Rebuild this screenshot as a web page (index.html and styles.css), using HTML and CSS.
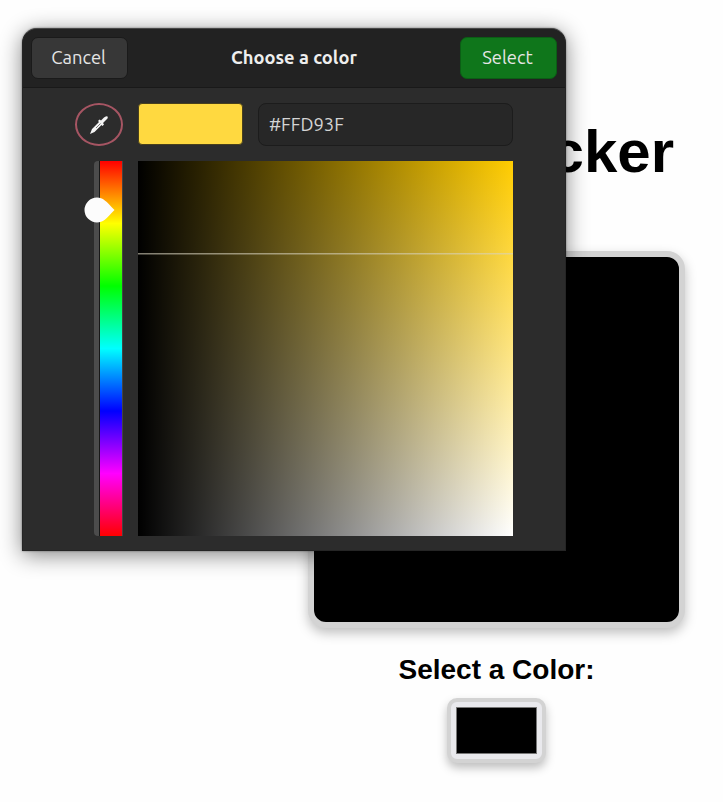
FILE: index.html
```html
<!DOCTYPE html>
<html lang="en">
<head>
<meta charset="utf-8">
<title>Color Picker</title>
<link rel="stylesheet" href="styles.css">
</head>
<body>
<main class="page">
  <h1 class="title">Picker</h1>
  <div class="preview"></div>
  <label class="label" for="color">Select a Color:</label>
  <button class="swatch-input" id="color" aria-label="Color"><span class="swatch-value"></span></button>
</main>
<section class="dialog">
  <header class="header">
    <button class="btn">Cancel</button>
    <h2 class="dialog-title">Choose a color</h2>
    <button class="btn btn-select">Select</button>
  </header>
  <div class="editor">
    <button class="dropper" aria-label="Pick a color">
      <svg width="20" height="20" viewBox="0 0 20 20">
        <path d="M1 19L3 14L10 7L9 6L10.500 4.500L12 5.500L15 2.500Q18 .500 18.500 1.500Q19.500 3 17 5L14 8L15 9.500L13.500 11L12.500 10L5.500 17Z" fill="#f4f4f4"/>
        <path d="M7 13L11.500 8.500" stroke="#777" stroke-width="1"/>
      </svg>
    </button>
    <div class="fields">
      <div class="current"></div>
      <div class="hex">#FFD93F</div>
    </div>
    <div class="hue">
      <svg class="thumb" width="32" height="26" viewBox="0 0 32 26"><path d="M13 .500A12.500 12.500 0 1 0 13 25.500C19 25.500 22 22 30.500 13C22 4 19 .500 13 .500Z" fill="#fcfcfc"/></svg>
    </div>
    <div class="plane"><div class="crosshair"></div></div>
  </div>
</section>
</body>
</html>
```
FILE: styles.css
```css
* { box-sizing: border-box; }
body {
  position: relative;
  margin: 0;
  width: 723px;
  height: 802px;
  overflow: hidden;
  background: #fefefe;
  color: #000;
  font-family: "Liberation Sans", Arial, sans-serif;
}
button { font: inherit; margin: 0; }
.page {
  width: 377px;
  margin-left: 308px;
  padding-top: 117px;
  display: flex;
  flex-direction: column;
  align-items: center;
}
.title {
  align-self: flex-end;
  margin: 0 11px 0 0;
  font-size: 60px;
  line-height: 70px;
  white-space: nowrap;
}
.preview {
  width: 377px;
  height: 377px;
  margin-top: 64px;
  border: 6px solid #d3d3d3;
  border-radius: 18px;
  background: #000;
  box-shadow: 0 5px 12px rgba(0, 0, 0, .25);
}
.label { margin-top: 26px; font-size: 28px; font-weight: bold; line-height: 32px; }
.swatch-input {
  width: 99px;
  height: 65px;
  margin: 12px 1px 0 0;
  padding: 5px;
  border: 4px solid #d3d3d3;
  border-radius: 10px;
  background: #e9e9ed;
  box-shadow: 0 5px 10px rgba(0, 0, 0, .25);
}
.swatch-value { display: block; height: 100%; border: 1px solid #777; background: #000; }

.dialog {
  position: absolute;
  left: 22px;
  top: 28px;
  width: 544px;
  height: 523px;
  border: 1px solid #252525;
  border-top-color: #484848;
  border-radius: 15px 15px 0 0;
  background: #2c2c2c;
  box-shadow: 0 0 2px rgba(0, 0, 0, .5), 0 4px 22px rgba(0, 0, 0, .48);
  color: #eee;
  font-family: Ubuntu, "Noto Sans", sans-serif;
  font-size: 18.400px;
}
.header {
  height: 59px;
  padding: 0 8px;
  display: flex;
  align-items: center;
  justify-content: space-between;
  border-bottom: 1px solid #191919;
  border-radius: 14px 14px 0 0;
  background: #222;
}
.btn {
  width: 97px;
  height: 42px;
  padding: 0 2px 2px 0;
  border: 1px solid #1a1a1a;
  border-radius: 7px;
  background: #373737;
  color: #e6e6e6;
}
.btn-select { border-color: #0b5e15; background: #0f761b; }
.dialog-title { margin: 0; padding-bottom: 2px; font-size: 18.300px; font-weight: 600; }
.editor {
  display: grid;
  grid-template-columns: 48px 375px;
  grid-template-rows: 43px 375px;
  column-gap: 15px;
  row-gap: 15px;
  padding: 15px 0 0 52px;
}
.dropper {
  width: 48px;
  height: 43px;
  padding: 0;
  display: flex;
  align-items: center;
  justify-content: center;
  border: 2px solid #a65563;
  border-radius: 50%;
  background: #2c2c2c;
}
.fields { display: flex; gap: 15px; }
.current {
  width: 105px;
  height: 42px;
  border: 1px solid #49401c;
  border-radius: 4px;
  background: #ffd940;
}
.hex {
  flex: 1;
  padding-left: 10px;
  border: 1px solid #1c1c1c;
  border-radius: 8px;
  background: #272727;
  line-height: 40px;
  color: #d4d4d4;
}
.hue {
  position: relative;
  width: 29px;
  justify-self: end;
  border-left: 5px solid #4c4c4c;
  border-right: 1px solid #444;
  border-radius: 4px 0 0 4px;
  background: linear-gradient(to right, #181818 1px, transparent 1px),
    linear-gradient(to bottom, #f00, #ff0 16.667%, #0f0 33.333%, #0ff 50%, #00f 66.667%, #f0f 83.333%, #f00);
}
.thumb { position: absolute; left: -15px; top: 36px; }
.plane {
  position: relative;
  background: linear-gradient(to right, #000, transparent), linear-gradient(to bottom, #fc0, #fff);
}
.crosshair { position: absolute; left: 0; right: 0; top: 92px; height: 2px; background: linear-gradient(rgba(215, 210, 190, .6) 50%, rgba(215, 210, 190, .3) 50%); }
```
